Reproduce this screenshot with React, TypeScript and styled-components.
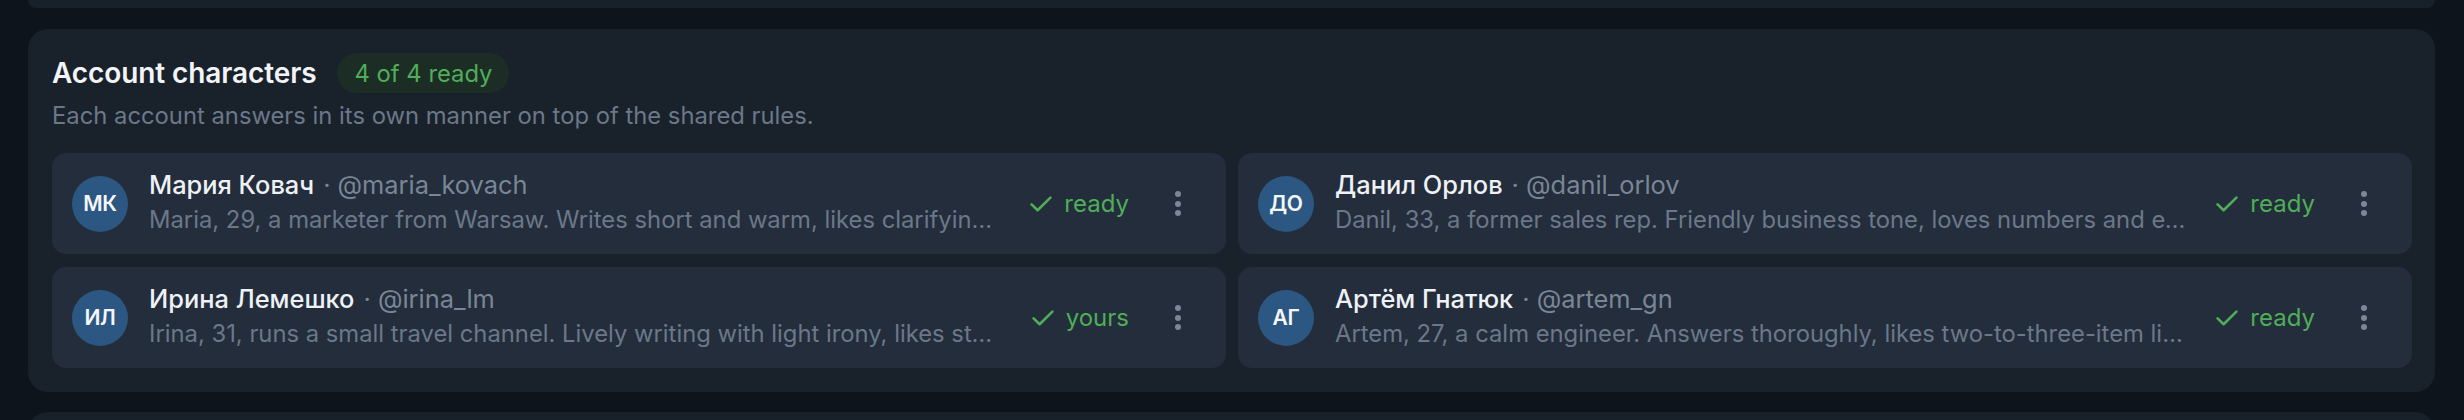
import React from "react";
import styled, { createGlobalStyle } from "styled-components";

type Character = {
  initials: string;
  name: string;
  handle: string;
  about: string;
  status: string;
};

const characters: Character[] = [
  {
    initials: "МК",
    name: "Мария Ковач",
    handle: "@maria_kovach",
    about:
      "Maria, 29, a marketer from Warsaw. Writes short and warm, likes clarifying questions and a friendly emoji now and then.",
    status: "ready",
  },
  {
    initials: "ДО",
    name: "Данил Орлов",
    handle: "@danil_orlov",
    about:
      "Danil, 33, a former sales rep. Friendly business tone, loves numbers and examples from real deals.",
    status: "ready",
  },
  {
    initials: "ИЛ",
    name: "Ирина Лемешко",
    handle: "@irina_lm",
    about:
      "Irina, 31, runs a small travel channel. Lively writing with light irony, likes stories from her own trips.",
    status: "yours",
  },
  {
    initials: "АГ",
    name: "Артём Гнатюк",
    handle: "@artem_gn",
    about:
      "Artem, 27, a calm engineer. Answers thoroughly, likes two-to-three-item lists and precise wording.",
    status: "ready",
  },
];

const App = (): React.ReactElement => {
  return (
    <>
      <GlobalStyle />
      <Page>
        <CardStub $edge="bottom" />
        <Card>
          <Header>
            <Title>Account characters</Title>
            <Pill>4 of 4 ready</Pill>
          </Header>
          <Subtitle>
            Each account answers in its own manner on top of the shared rules.
          </Subtitle>
          <Grid>
            {characters.map((c) => (
              <Row key={c.handle}>
                <Avatar>{c.initials}</Avatar>
                <Info>
                  <NameLine>
                    <Name>{c.name}</Name>
                    <Handle>· {c.handle}</Handle>
                  </NameLine>
                  <About>{c.about}</About>
                </Info>
                <Status>
                  <svg width="22" height="16" viewBox="0 0 22 16" fill="none">
                    <path
                      d="M1.6 8.4 L7.6 14.2 L20.4 1.6"
                      stroke="currentColor"
                      strokeWidth="2.6"
                      strokeLinecap="round"
                      strokeLinejoin="round"
                    />
                  </svg>
                  <span>{c.status}</span>
                </Status>
                <MenuButton aria-label="More">
                  <Dot />
                  <Dot />
                  <Dot />
                </MenuButton>
              </Row>
            ))}
          </Grid>
        </Card>
        <CardStub $edge="top" />
      </Page>
    </>
  );
};

export default App;

const GlobalStyle = createGlobalStyle`
  html, body {
    margin: 0;
    padding: 0;
    background: #0e141b;
    font-family: Inter, "Noto Sans", "Noto Sans CJK SC", sans-serif;
    -webkit-font-smoothing: antialiased;
  }
`;

const Page = styled.div`
  display: flex;
  flex-direction: column;
  gap: 20px;
  height: 420px;
  overflow: hidden;
  padding: 0 29px 0 28px;
  box-sizing: border-box;
`;

const CardStub = styled.div<{ $edge: "top" | "bottom" }>`
  flex: none;
  height: ${(p) => (p.$edge === "bottom" ? "8px" : "30px")};
  background: #18202a;
  border-radius: ${(p) => (p.$edge === "bottom" ? "0 0 20px 20px" : "20px 20px 0 0")};
  margin-bottom: ${(p) => (p.$edge === "bottom" ? "1px" : "0")};
`;

const Card = styled.section`
  flex: none;
  background: #19212b;
  border-radius: 20px;
  padding: 24px 23px 24px 24px;
`;

const Header = styled.div`
  display: flex;
  align-items: center;
  gap: 21px;
  height: 40px;
`;

const Title = styled.h2`
  margin: 0;
  font-size: 28px;
  line-height: 36px;
  font-weight: 600;
  color: #f2f4f7;
  letter-spacing: -0.1px;
`;

const Pill = styled.span`
  display: inline-flex;
  align-items: center;
  height: 40px;
  padding: 0 17px;
  border-radius: 20px;
  background: #1c2d26;
  color: #4fae57;
  font-size: 23.8px;
`;

const Subtitle = styled.p`
  margin: 7px 0 0;
  font-size: 23.8px;
  line-height: 32px;
  color: #6b7889;
`;

const Grid = styled.div`
  display: grid;
  grid-template-columns: 1fr 1fr;
  column-gap: 12px;
  row-gap: 13px;
  margin-top: 21px;
`;

const Row = styled.div`
  display: flex;
  align-items: center;
  height: 101px;
  padding: 0 26px 0 20px;
  background: #232d3b;
  border-radius: 14px;
  min-width: 0;
`;

const Avatar = styled.div`
  flex: none;
  width: 56px;
  height: 56px;
  border-radius: 50%;
  background: #2c5782;
  color: #f4f6f9;
  display: flex;
  align-items: center;
  justify-content: center;
  font-size: 21px;
  font-weight: 600;
  letter-spacing: -0.3px;
`;

const Info = styled.div`
  flex: 1;
  min-width: 0;
  margin-left: 21px;
  padding-bottom: 4px;
`;

const NameLine = styled.div`
  display: flex;
  align-items: baseline;
  gap: 9px;
  font-size: 25.4px;
  line-height: 36px;
  white-space: nowrap;
  overflow: hidden;
`;

const Name = styled.span`
  color: #eef1f5;
  font-weight: 450;
`;

const Handle = styled.span`
  color: #7a8696;
  overflow: hidden;
  text-overflow: ellipsis;
`;

const About = styled.div`
  margin-top: 1px;
  font-size: 23.8px;
  line-height: 32px;
  color: #6b7889;
  white-space: nowrap;
  overflow: hidden;
  text-overflow: ellipsis;
`;

const Status = styled.div`
  flex: none;
  display: flex;
  align-items: center;
  gap: 12px;
  min-width: 96px;
  margin-left: 30px;
  color: #4fae57;
  font-size: 24px;
  line-height: 34px;

  svg {
    flex: none;
  }
`;

const MenuButton = styled.button`
  flex: none;
  width: 44px;
  height: 44px;
  margin-left: 27px;
  padding: 0;
  border: 0;
  background: transparent;
  display: flex;
  flex-direction: column;
  align-items: center;
  justify-content: center;
  gap: 3.5px;
  cursor: pointer;
`;

const Dot = styled.span`
  width: 6px;
  height: 6px;
  border-radius: 50%;
  background: #7b8796;
`;
